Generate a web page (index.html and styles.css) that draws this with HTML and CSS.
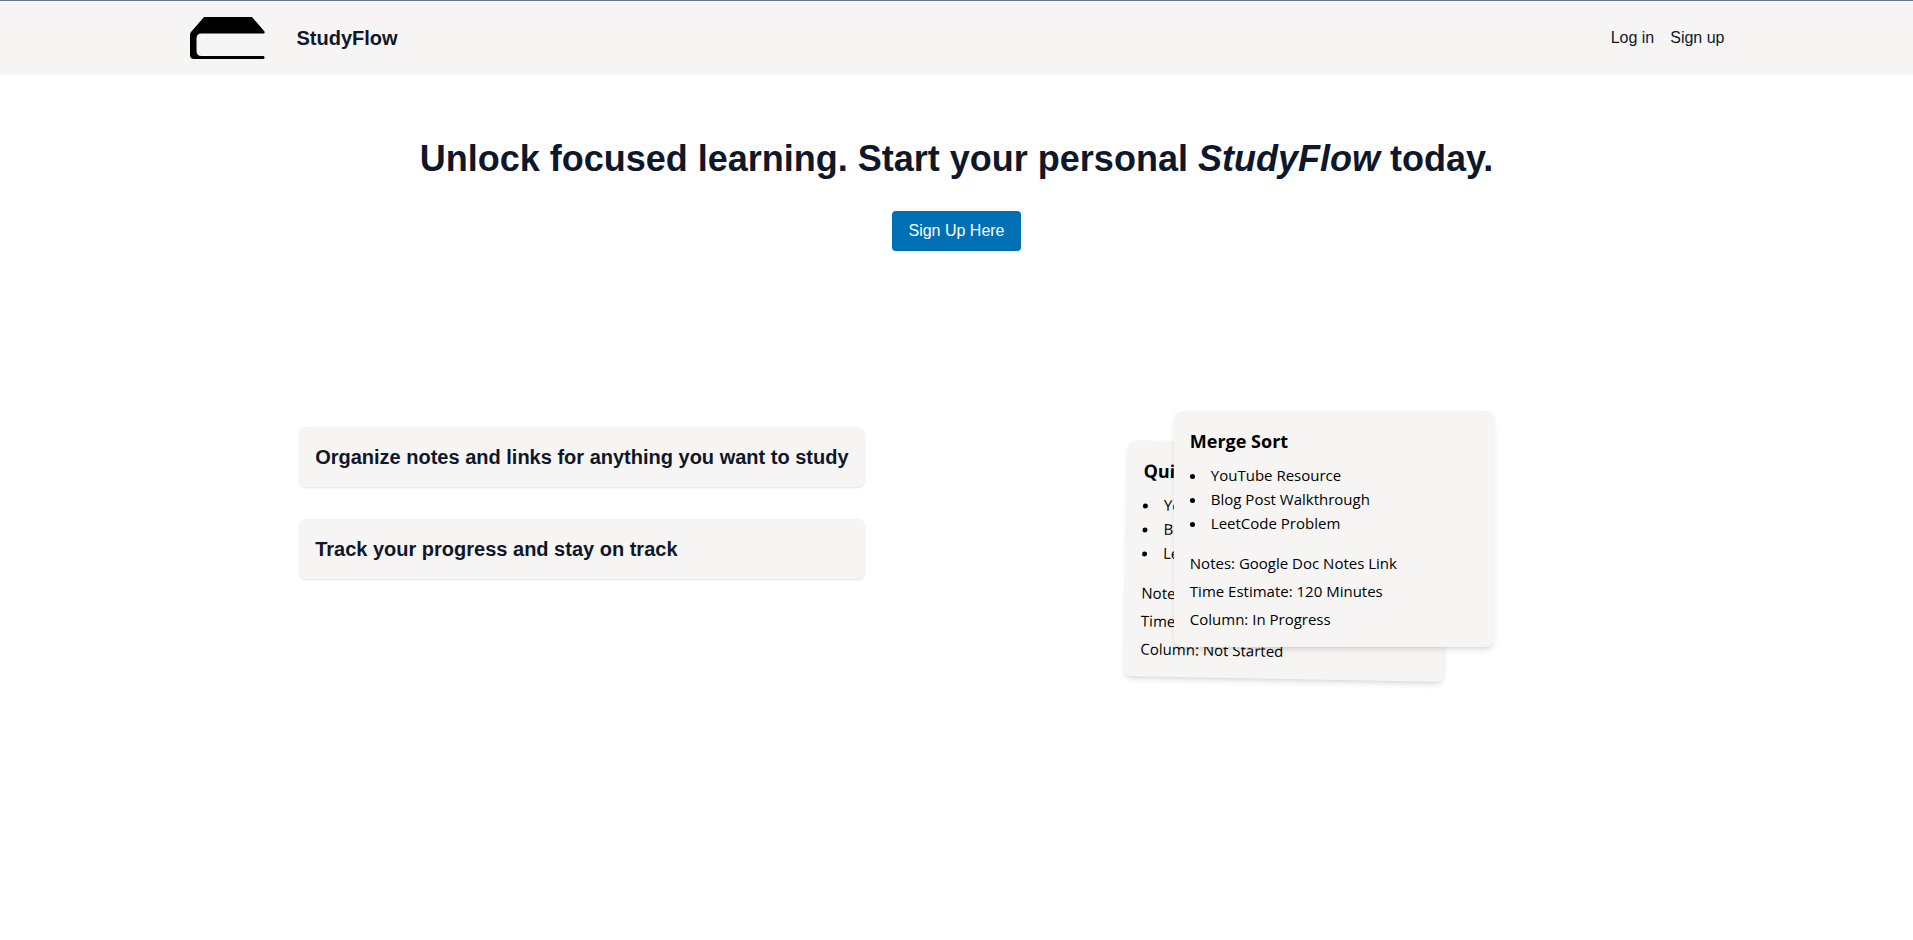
FILE: index.html
```
<!DOCTYPE html>
<html lang="en">
<head>
<meta charset="utf-8">
<meta name="viewport" content="width=device-width, initial-scale=1">
<title>StudyFlow</title>
<link rel="stylesheet" href="styles.css">
</head>
<body>
<header class="site-header">
  <div class="container header-inner">
    <a class="brand" href="#">
      <svg class="brand-logo" viewBox="0 0 76 42" aria-hidden="true">
        <path fill="#000" d="M15 0H63L75.500 14.500Q76 16.500 74.500 16.500H12.500Q7.500 16.500 7.500 21.500V34Q7.500 39 12.500 39H74.500Q75.500 39 75.500 40.500T74.500 42H5Q1 42 1 38V18Q1 16.500 2 15Z"/>
      </svg>
      <span class="brand-name">StudyFlow</span>
    </a>
    <nav class="nav">
      <a href="#">Log in</a>
      <a href="#">Sign up</a>
    </nav>
  </div>
</header>
<main class="container">
  <section class="hero">
    <h1 class="hero-title">Unlock focused learning. Start your personal <em>StudyFlow</em> today.</h1>
    <button class="cta" type="button">Sign Up Here</button>
  </section>
  <section class="showcase">
    <div class="features">
      <h2 class="feature">Organize notes and links for anything you want to study</h2>
      <h2 class="feature">Track your progress and stay on track</h2>
    </div>
    <div class="stack">
      <article class="card card-back">
        <h3 class="card-title">Quick Sort</h3>
        <ul class="resources">
          <li>YouTube Resource</li>
          <li>Blog Post Walkthrough</li>
          <li>LeetCode Problem</li>
        </ul>
        <p>Notes: Google Doc Notes Link</p>
        <p>Time Estimate: 60 Minutes</p>
        <p>Column: Not Started</p>
      </article>
      <article class="card card-front">
        <h3 class="card-title">Merge Sort</h3>
        <ul class="resources">
          <li>YouTube Resource</li>
          <li>Blog Post Walkthrough</li>
          <li>LeetCode Problem</li>
        </ul>
        <p>Notes: Google Doc Notes Link</p>
        <p>Time Estimate: 120 Minutes</p>
        <p>Column: In Progress</p>
      </article>
    </div>
  </section>
</main>
</body>
</html>
```
FILE: styles.css
```
* {
  box-sizing: border-box;
  margin: 0;
  padding: 0;
}

body {
  min-height: 100vh;
  background: #fff;
  color: #0f172a;
  font-family: "Liberation Sans", Arial, sans-serif;
  font-size: 16px;
  line-height: 24px;
}

a {
  color: inherit;
  text-decoration: none;
}

.container {
  max-width: 1536px;
  margin: 0 auto;
}

.site-header {
  border-top: 1px solid #64748b;
  background: #f6f5f4;
}

.header-inner {
  display: flex;
  align-items: center;
  justify-content: space-between;
  padding: 16px 0;
}

.brand {
  display: flex;
  align-items: center;
  gap: 32px;
}

.brand-logo {
  display: block;
  width: 76px;
  height: 42px;
}

.brand-name {
  font-size: 20px;
  font-weight: 700;
  line-height: 28px;
}

.nav {
  display: flex;
  gap: 16px;
}

.hero {
  display: flex;
  flex-direction: column;
  align-items: center;
  gap: 32px;
  padding-top: 64px;
}

.hero-title {
  font-size: 36px;
  font-weight: 700;
  line-height: 40px;
  text-align: center;
}

.cta {
  padding: 8px 16px;
  border: 0;
  border-radius: 4px;
  background: #0070b5;
  color: #fff;
  font: inherit;
}

.showcase {
  display: flex;
  justify-content: space-around;
  flex-wrap: wrap;
  padding: 160px 0 64px;
}

.features {
  display: flex;
  flex-direction: column;
  gap: 32px;
  padding-top: 16px;
}

.feature {
  padding: 16px;
  border-radius: 8px;
  background: #f6f5f4;
  box-shadow: 0 1px 2px rgba(0, 0, 0, 0.12);
  font-size: 20px;
  font-weight: 700;
  line-height: 28px;
}

.stack {
  display: grid;
  padding: 0 120px 0 88px;
}

.card {
  grid-area: 1 / 1;
  width: 320px;
  padding: 16px;
  border-radius: 8px;
  background: #f6f5f4;
  box-shadow: 0 4px 6px -1px rgba(0, 0, 0, 0.1), 0 2px 4px -2px rgba(0, 0, 0, 0.1);
  color: #000;
  font-family: "Segoe UI", "Open Sans", sans-serif;
  font-size: 15px;
}

.card-back {
  transform: translate(-48px, 32px) rotate(1deg);
}

.card-front {
  z-index: 1;
}

.card-title {
  margin-bottom: 8px;
  font-size: 18px;
  font-weight: 700;
  line-height: 28px;
}

.resources {
  margin-bottom: 16px;
  list-style-position: inside;
}

.card p + p {
  margin-top: 4px;
}
```
